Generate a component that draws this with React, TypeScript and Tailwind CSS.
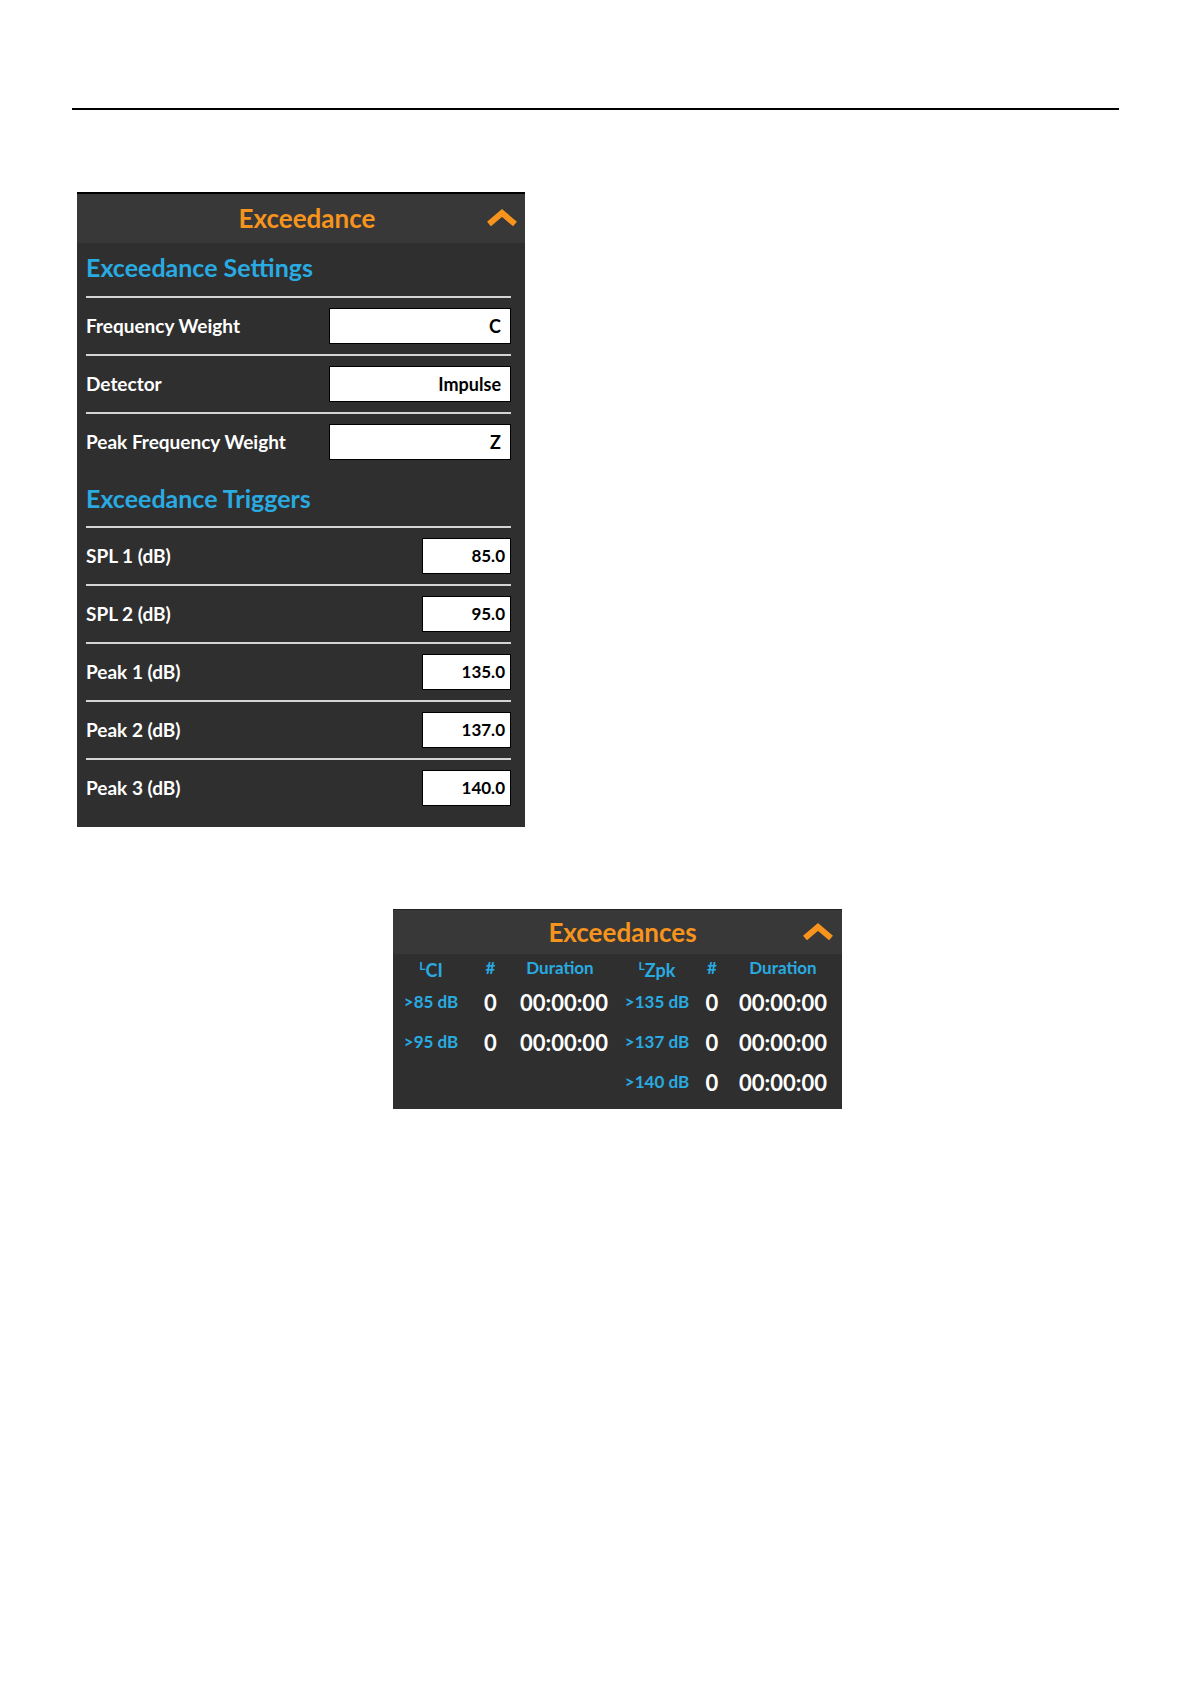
import React from "react";

const FONT = { fontFamily: "Lato, 'Open Sans', 'Liberation Sans', sans-serif" };

function Chevron() {
  return (
    <svg width="30" height="18" viewBox="0 0 30 18" aria-hidden>
      <polyline points="2,16 15,5 28,16" fill="none" stroke="#f7941d" strokeWidth="6" strokeLinejoin="miter" />
    </svg>
  );
}

function SettingRow({ label, value, wide }: { label: string; value: string; wide?: boolean }) {
  return (
    <div className="flex h-[58px] items-center justify-between border-t-2 border-[#d4d4d4]">
      <span className="text-[19px] font-bold text-white">{label}</span>
      <div
        className={
          wide
            ? "flex h-[36px] w-[182px] items-center justify-end border border-black bg-white pr-[9px] text-[18px] font-bold text-black"
            : "flex h-[36px] w-[89px] items-center justify-end border border-black bg-white pr-[5px] text-[17px] font-bold text-black"
        }
      >
        {value}
      </div>
    </div>
  );
}

const settings = [
  { label: "Frequency Weight", value: "C" },
  { label: "Detector", value: "Impulse" },
  { label: "Peak Frequency Weight", value: "Z" },
];

const triggers = [
  { label: "SPL 1 (dB)", value: "85.0" },
  { label: "SPL 2 (dB)", value: "95.0" },
  { label: "Peak 1 (dB)", value: "135.0" },
  { label: "Peak 2 (dB)", value: "137.0" },
  { label: "Peak 3 (dB)", value: "140.0" },
];

type Ex = { lvl: string; n: string; dur: string };

function Cells({ a, b }: { a?: Ex; b?: Ex }) {
  return (
    <div className="flex h-[40px] items-center">
      <div className="w-[60px] text-center text-[17px] font-bold text-[#29abe2]">{a?.lvl}</div>
      <div className="w-[59px] text-center text-[22px] font-bold text-white">{a?.n}</div>
      <div className="w-[80px] text-center text-[22px] font-bold text-white">{a?.dur}</div>
      <div className="ml-[19px] w-[76px] text-center text-[17px] font-bold text-[#29abe2]">{b?.lvl}</div>
      <div className="w-[34px] text-center text-[22px] font-bold text-white">{b?.n}</div>
      <div className="w-[108px] text-center text-[22px] font-bold text-white">{b?.dur}</div>
    </div>
  );
}

export default function App() {
  return (
    <div className="min-h-[1684px] w-[1191px] bg-white pt-[108px]" style={FONT}>
      <div className="mx-[72px] h-[2px] bg-black" />

      {/* Exceedance settings panel */}
      <div className="ml-[77px] mt-[82px] w-[448px] border-t-2 border-black bg-[#2f2f2f]">
        <div className="relative flex h-[49px] items-center justify-center bg-[#383838]">
          <span className="pl-[12px] text-[26px] font-bold text-[#f7941d]">Exceedance</span>
          <div className="absolute right-[8px] top-[14px]">
            <Chevron />
          </div>
        </div>
        <div className="pb-[11px] pl-[9px] pr-[14px]">
          <div className="flex h-[53px] items-center pb-[4px] text-[25px] font-bold text-[#29abe2]">
            Exceedance Settings
          </div>
          {settings.map((s) => (
            <SettingRow key={s.label} label={s.label} value={s.value} wide />
          ))}
          <div className="flex h-[56px] items-center pt-[2px] text-[25px] font-bold text-[#29abe2]">
            Exceedance Triggers
          </div>
          {triggers.map((t) => (
            <SettingRow key={t.label} label={t.label} value={t.value} />
          ))}
        </div>
      </div>

      {/* Exceedances results panel */}
      <div className="ml-[393px] mt-[82px] w-[449px] border-t border-[#222] bg-[#2f2f2f]">
        <div className="relative flex h-[44px] items-center justify-center bg-[#383838]">
          <span className="pl-[10px] text-[26px] font-bold text-[#f7941d]">Exceedances</span>
          <div className="absolute right-[9px] top-[12px]">
            <Chevron />
          </div>
        </div>
        <div className="pb-[7px] pl-[8px]">
          <div className="flex h-[28px] items-center text-[17px] font-bold text-[#29abe2]">
            <div className="w-[60px] text-center">
              <span className="relative -top-[5px] text-[12px]">L</span>
              <span className="relative top-[2px] text-[18px]">CI</span>
            </div>
            <div className="w-[59px] text-center">#</div>
            <div className="w-[80px] text-center">Duration</div>
            <div className="ml-[19px] w-[76px] text-center">
              <span className="relative -top-[5px] text-[12px]">L</span>
              <span className="relative top-[2px] text-[18px]">Zpk</span>
            </div>
            <div className="w-[34px] text-center">#</div>
            <div className="w-[108px] text-center">Duration</div>
          </div>
          <Cells a={{ lvl: ">85 dB", n: "0", dur: "00:00:00" }} b={{ lvl: ">135 dB", n: "0", dur: "00:00:00" }} />
          <Cells a={{ lvl: ">95 dB", n: "0", dur: "00:00:00" }} b={{ lvl: ">137 dB", n: "0", dur: "00:00:00" }} />
          <Cells b={{ lvl: ">140 dB", n: "0", dur: "00:00:00" }} />
        </div>
      </div>
    </div>
  );
}
